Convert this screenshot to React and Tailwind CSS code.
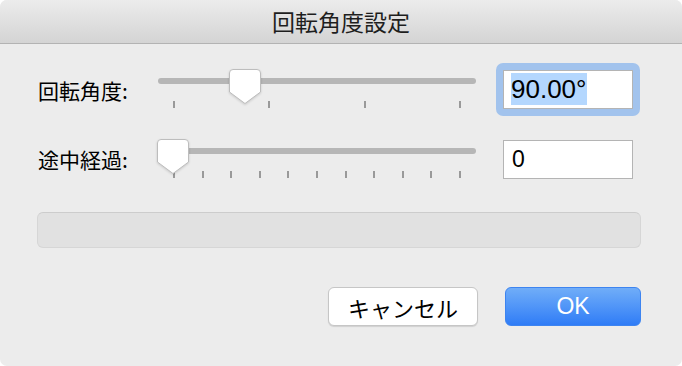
import React from 'react';

const jp = { fontFamily: '"Noto Sans CJK JP", "Noto Sans", sans-serif' };
const latin = { fontFamily: '"Liberation Sans", Arial, sans-serif' };

const Thumb = () => (
  <svg width="34" height="37" viewBox="0 0 34 37" className="drop-shadow-[0_1px_1px_rgba(0,0,0,0.15)]">
    <path
      d="M5 1.5 H29 A3.5 3.5 0 0 1 32.5 5 V24 L17 35.5 L1.5 24 V5 A3.5 3.5 0 0 1 5 1.5 Z"
      fill="#ffffff"
      stroke="#bdbdbd"
      strokeWidth="1"
    />
  </svg>
);

const Slider = ({ ticks, thumbLeft }) => (
  <div className="relative w-[318px] h-[40px] shrink-0">
    <div className="absolute left-0 right-0 top-[9px] h-[6px] rounded-full bg-[#b6b6b6]" />
    <div className="absolute left-[15px] right-[15px] top-[32px] flex justify-between">
      {Array.from({ length: ticks }).map((_, i) => (
        <div key={i} className="w-[2px] h-[7px] bg-[#999999]" />
      ))}
    </div>
    <div className="absolute top-[-1px]" style={{ left: thumbLeft - 1 }}>
      <Thumb />
    </div>
  </div>
);

export default function App() {
  return (
    <div className="w-[682px] h-[366px] bg-white">
      <div className="w-full h-full rounded-[7px] overflow-hidden bg-[#ececec] flex flex-col">
        {/* title bar */}
        <div className="h-[44px] shrink-0 flex items-center justify-center bg-gradient-to-b from-[#ececec] to-[#d4d4d4] border-b border-[#b3b3b3]">
          <span className="text-[23px] text-[#1e1e1e] leading-none" style={jp}>回転角度設定</span>
        </div>

        <div className="flex flex-col pl-[38px] pt-[18px]">
          {/* row 1 */}
          <div className="flex items-center h-[54px]">
            <div className="w-[120px] shrink-0 text-[21px] leading-none text-black pt-[3px]" style={jp}>回転角度:</div>
            <Slider ticks={4} thumbLeft={71} />
            <div className="ml-[20px] p-[7px] rounded-[7px] bg-[#a2c3ed]">
              <div className="w-[130px] h-[39px] bg-white border border-[#b4b4b4] flex items-center pl-[7px]">
                <span className="bg-[#b4d7fe] text-[26px] leading-[32px] text-black pr-[1px]" style={latin}>90.00°</span>
              </div>
            </div>
          </div>

          {/* row 2 */}
          <div className="flex items-center h-[40px] mt-[23px]">
            <div className="w-[120px] shrink-0 text-[21px] leading-none text-black" style={jp}>途中経過:</div>
            <Slider ticks={11} thumbLeft={-1} />
            <div className="ml-[27px] w-[130px] h-[39px] bg-white border border-[#b4b4b4] flex items-center pl-[8px]">
              <span className="text-[23px] leading-none text-black" style={latin}>0</span>
            </div>
          </div>
        </div>

        {/* progress area */}
        <div className="mx-[37px] mt-[33px] mr-[41px] h-[36px] rounded-[6px] bg-[#e1e1e1] border border-[#d6d6d6] border-t-[#cccccc]" />

        {/* buttons */}
        <div className="flex justify-end gap-[27px] pr-[41px] mt-[39px]">
          <button className="w-[150px] h-[39px] rounded-[6px] bg-white border border-[#c6c6c6] shadow-[0_1px_1px_rgba(0,0,0,0.12)] text-[22px] leading-none text-black" style={jp}>
            キャンセル
          </button>
          <button className="w-[136px] h-[39px] rounded-[6px] bg-gradient-to-b from-[#70adf8] to-[#2f7cf6] border border-[#3d84f0] text-[23px] leading-none text-white" style={latin}>
            OK
          </button>
        </div>
      </div>
    </div>
  );
}
